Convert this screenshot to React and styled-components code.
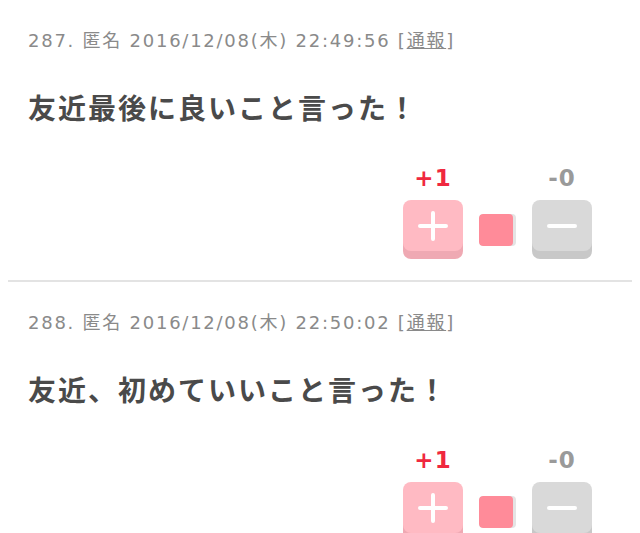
import React from 'react'
import styled, { createGlobalStyle } from 'styled-components'

const GlobalStyle = createGlobalStyle`
    body{
        margin: 0;
        background: #fff;
        font-family: "Noto Sans CJK JP", "Noto Sans", sans-serif;
    }
`

const List = styled.div`
    padding: 0 8px;
`

const Post = styled.div`
    padding: 29px 20px 21px;
    border-bottom: 2px solid #e3e3e3;
`

const Meta = styled.div`
    font-family: "DejaVu Sans", "Noto Sans CJK JP", sans-serif;
    font-size: 18px;
    line-height: 24px;
    letter-spacing: 1.75px;
    color: #8a8a8a;

    a{
        color: #8a8a8a;
        text-decoration: underline;
    }
`

const Body = styled.p`
    margin: 36px 0 0;
    font-size: 28px;
    line-height: 36px;
    font-weight: bold;
    letter-spacing: 2px;
    color: #4a4a4a;
`

const Votes = styled.div`
    display: flex;
    justify-content: flex-end;
    align-items: flex-end;
    margin-top: 39px;
    padding-right: 20px;
`

const VoteCol = styled.div`
    display: flex;
    flex-direction: column;
    align-items: center;
    width: 60px;
`

const Score = styled.div`
    font-size: 23px;
    line-height: 28px;
    font-weight: bold;
    letter-spacing: 1px;
    font-family: "DejaVu Sans", sans-serif;
    color: ${p => (p.$up ? '#f0283f' : '#9a9a9a')};
    margin-bottom: 8px;
`

const VoteButton = styled.button`
    width: 60px;
    height: 51px;
    margin-bottom: 8px;
    border: none;
    border-radius: 8px;
    padding: 0;
    display: flex;
    align-items: center;
    justify-content: center;
    background: ${p => (p.$up ? '#ffbac3' : '#d9d9d9')};
    box-shadow: 0 8px 0 ${p => (p.$up ? '#efa9b3' : '#c8c8c8')};
`

const Ratio = styled.div`
    width: 37px;
    height: 32px;
    margin: 0 16px 13px;
    border-radius: 4px;
    background: #e4e4e4;
    overflow: hidden;
    display: flex;
`

const RatioFill = styled.div`
    height: 100%;
    background: #ff8b99;
    border-radius: 4px;
`

const PlusIcon = () => (
    <svg width="30" height="30" viewBox="0 0 30 30">
        <path d="M15 2 V28 M2 15 H28" stroke="#fff" strokeWidth="4" strokeLinecap="round" fill="none" />
    </svg>
)

const MinusIcon = () => (
    <svg width="30" height="30" viewBox="0 0 30 30">
        <path d="M2 15 H28" stroke="#fff" strokeWidth="4" strokeLinecap="round" fill="none" />
    </svg>
)

const posts = [
    { no: 287, date: '2016/12/08(木) 22:49:56', text: '友近最後に良いこと言った！', plus: 1, minus: 0 },
    { no: 288, date: '2016/12/08(木) 22:50:02', text: '友近、初めていいこと言った！', plus: 1, minus: 0 },
]

const App = () => {
    return (
        <List>
            <GlobalStyle />
            {posts.map(post => {
                const total = post.plus + post.minus
                const ratio = total > 0 ? post.plus / total : 0.5
                return (
                    <Post key={post.no}>
                        <Meta>
                            {post.no}. 匿名 {post.date} [<a href="#">通報</a>]
                        </Meta>
                        <Body>{post.text}</Body>
                        <Votes>
                            <VoteCol>
                                <Score $up>+{post.plus}</Score>
                                <VoteButton $up><PlusIcon /></VoteButton>
                            </VoteCol>
                            <Ratio>
                                {/* fill is a bit short of full like the original */}
                                <RatioFill style={{ width: `${ratio * 92}%` }} />
                            </Ratio>
                            <VoteCol>
                                <Score>-{post.minus}</Score>
                                <VoteButton><MinusIcon /></VoteButton>
                            </VoteCol>
                        </Votes>
                    </Post>
                )
            })}
        </List>
    )
}

export default App
